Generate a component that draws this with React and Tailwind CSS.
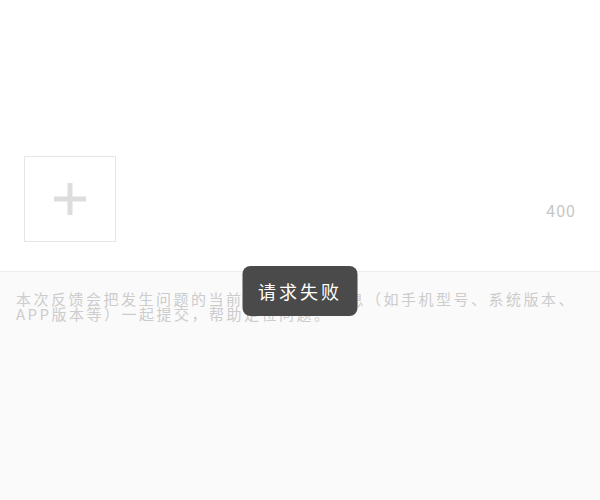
export default function App() {
  return (
    <div
      className="relative h-[500px] w-[600px] overflow-hidden bg-[#fafafa]"
      style={{ fontFamily: '"Noto Sans CJK SC", "Noto Sans", sans-serif' }}
    >
      <section className="h-[272px] border-b border-[#ececec] bg-white">
        <div className="h-[156px]" />
        <div className="flex items-center justify-between pl-6 pr-6">
          <button className="flex h-[86px] w-[92px] items-center justify-center border border-[#e6e6e6] bg-white">
            <svg width="32" height="32" viewBox="0 0 32 32">
              <rect x="0" y="13.5" width="32" height="5" fill="#dddddd" />
              <rect x="13.5" y="0" width="5" height="32" fill="#dddddd" />
            </svg>
          </button>
          <span className="mt-[22px] text-[16px] tracking-[1px] text-[#c6c6c6]">400</span>
        </div>
      </section>

      <p className="px-4 pt-[19px] text-[15px] leading-[15px] tracking-[2.5px] text-[#cccccc]">
        本次反馈会把发生问题的当前页面和设备信息（如手机型号、系统版本、APP版本等）一起提交，帮助定位问题。
      </p>

      <div className="absolute left-1/2 top-[266px] flex h-[50px] w-[115px] -translate-x-1/2 items-center justify-center rounded-lg bg-[#4a4a4a] text-[18px] tracking-[3px] text-white">
        请求失败
      </div>
    </div>
  );
}
